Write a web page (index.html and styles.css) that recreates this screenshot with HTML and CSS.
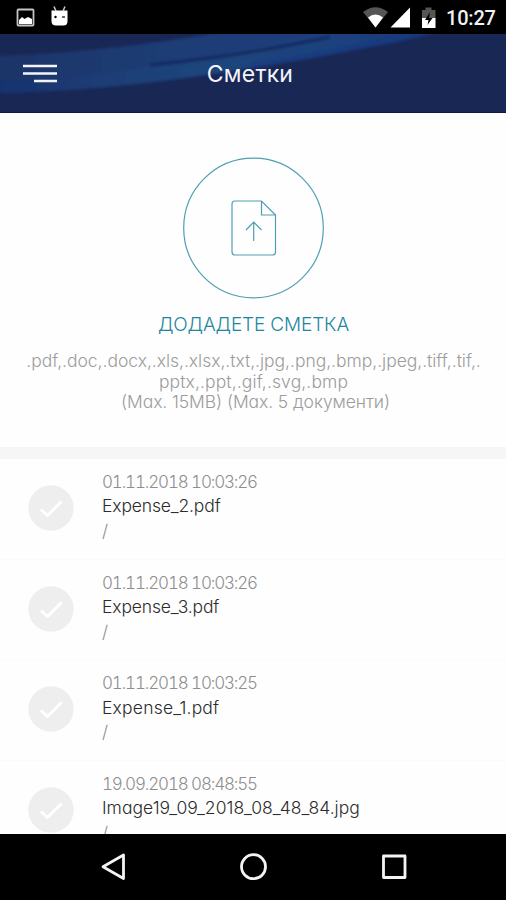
FILE: index.html
```html
<!DOCTYPE html>
<html lang="mk">
<head>
<meta charset="utf-8">
<title>Сметки</title>
<link rel="stylesheet" href="styles.css">
</head>
<body>
<div class="status">
  <svg class="status-left" width="60" height="34" viewBox="0 0 60 34">
    <rect x="17.5" y="9.5" width="16" height="16" rx="1" fill="none" stroke="#c4c4c4" stroke-width="1.800"/>
    <path d="M19 24V20l3-3 2.500 2 3.500-2 4 2v5z" fill="#fff"/>
    <path d="M51.500 10.500H67.500V21Q67.500 25.500 63.500 25.500H56Q51.500 25.500 51.500 21z" fill="#fff"/>
    <path d="M54 6.500l2 4.500M65 6.500l-2 4.500" stroke="#ccc" stroke-width="1.500"/>
    <circle cx="55.500" cy="17" r="1.200"/><path d="M62 17h3" stroke="#000" stroke-width="1.200"/>
  </svg>
  <svg width="78" height="34" viewBox="360 0 78 34">
    <path d="M363 12Q375.500 2.500 388 12L375.500 27.500z" fill="#555"/>
    <path d="M368 17.500Q375.500 11.500 383 17.500L375.500 27.500z" fill="#fff"/>
    <path d="M390.500 27.500L410 7.500V27.500z" fill="#fff"/>
    <path d="M422 10h3.500V7.500h6V10h4v9h-13.500z" fill="#555"/>
    <path d="M422 18h13.500v10H422z" fill="#fff"/>
    <path d="M430 12l-5 8h3.500l-1 5 5-7h-3.500z"/>
  </svg>
  <span class="clock">10:27</span>
</div>
<header class="bar">
  <svg class="waves" width="506" height="79" viewBox="0 0 506 79">
    <defs>
      <linearGradient id="upper" x1="0" x2="1" y1="0" y2="0"><stop offset="0" stop-color="#1a3466"/><stop offset=".6" stop-color="#1b3e77"/><stop offset="1" stop-color="#193b7c"/></linearGradient>
      <linearGradient id="lower" gradientUnits="userSpaceOnUse" x1="0" x2="440" y1="0" y2="0"><stop offset="0" stop-color="#18336e"/><stop offset=".45" stop-color="#1e457c"/><stop offset=".75" stop-color="#1d427e"/><stop offset="1" stop-color="#193575"/></linearGradient>
      <filter id="soft" x="-5%" y="-30%" width="110%" height="160%"><feGaussianBlur stdDeviation="1.800"/></filter>
    </defs>
    <g filter="url(#soft)">
      <path d="M-10 22Q110 19 245 -6H345Q240 19 150 33 70 48 -10 60z" fill="url(#upper)"/>
      <path d="M-10 46Q60 46 130 36 230 20 345 -6H460Q350 17 250 34 110 58 -10 59z" fill="url(#lower)"/>
      <path d="M150 31Q240 22 330 3" fill="none" stroke="#192c64" stroke-width="4"/>
      <path d="M250 32Q340 17 420 0" fill="none" stroke="#183b82" stroke-width="6" opacity=".7"/>
    </g>
  </svg>
  <svg class="menu" width="36" height="22" viewBox="0 0 36 22"><path d="M1 3h34M1 10.500h34M12 18h23" stroke="#f3f3fb" stroke-width="2.400"/></svg>
  <h1 class="title">Сметки</h1>
</header>
<main class="content">
  <section class="upload">
    <svg class="upload-icon" width="142" height="142" viewBox="0 0 142 142" fill="none" stroke="#4f9fb2" stroke-width="1.200">
      <circle cx="70.500" cy="71" r="69.800"/>
      <path d="M78.500 44H52Q49 44 49 47V95Q49 98 52 98H89.500Q92.500 98 92.500 95V58zM78.500 44V58H92.500"/>
      <path d="M70.700 84V65M63 73L70.700 65 78.500 73"/>
    </svg>
    <h2 class="upload-title">ДОДАДЕТЕ СМЕТКА</h2>
    <p class="hint"><span class="exts">.pdf,.doc,.docx,.xls,.xlsx,.txt,.jpg,.png,.bmp,.jpeg,.tiff,.tif,.</span><span class="exts-more">pptx,.ppt,.gif,.svg,.bmp</span><span class="limits">(Max. 15MB) (Max. 5 документи)</span></p>
  </section>
  <ul class="list">
    <li class="row"><svg class="check" viewBox="0 0 46 46"><circle cx="23" cy="23" r="22.700"/><path d="M13 24.500l6.500 6L33.500 16.500"/></svg><div><p class="date">01.11.2018 10:03:26</p><p class="name">Expense_2.pdf</p><p class="path">/</p></div></li>
    <li class="row"><svg class="check" viewBox="0 0 46 46"><circle cx="23" cy="23" r="22.700"/><path d="M13 24.500l6.500 6L33.500 16.500"/></svg><div><p class="date">01.11.2018 10:03:26</p><p class="name">Expense_3.pdf</p><p class="path">/</p></div></li>
    <li class="row"><svg class="check" viewBox="0 0 46 46"><circle cx="23" cy="23" r="22.700"/><path d="M13 24.500l6.500 6L33.500 16.500"/></svg><div><p class="date">01.11.2018 10:03:25</p><p class="name short">Expense_1.pdf</p><p class="path">/</p></div></li>
    <li class="row"><svg class="check" viewBox="0 0 46 46"><circle cx="23" cy="23" r="22.700"/><path d="M13 24.500l6.500 6L33.500 16.500"/></svg><div><p class="date">19.09.2018 08:48:55</p><p class="name long">Image19_09_2018_08_48_84.jpg</p><p class="path">/</p></div></li>
  </ul>
</main>
<nav class="nav">
  <svg width="506" height="66" viewBox="0 0 506 66" fill="none" stroke="#f4f4f4" stroke-width="2.800" stroke-linejoin="round">
    <path d="M103 32.700L123.500 21V44.500z"/><circle cx="253.500" cy="32.700" r="12"/><rect x="383.500" y="22" width="21.500" height="21.500"/>
  </svg>
</nav>
</body>
</html>
```
FILE: styles.css
```css
* { box-sizing: border-box; margin: 0; padding: 0; }
body {
  width: 506px; height: 900px; overflow: hidden;
  display: flex; flex-direction: column;
  background: #fff;
  font-family: Inter, "Open Sans", sans-serif;
  font-weight: 300;
  font-feature-settings: "cv11";
}
.status { height: 34px; flex: none; background: #000; display: flex; align-items: center; padding-right: 10px; }
.status-left { margin-right: auto; overflow: visible; }
.clock { font: 500 20px/34px Roboto, sans-serif; color: #f2f2f2; margin: 2px 0 0 8px; width: 50px; white-space: nowrap; letter-spacing: -0.2px; }
.bar {
  position: relative; height: 79px; flex: none;
  display: flex; align-items: center; justify-content: center;
  background: #192755; border-bottom: 1px solid #101a40; overflow: hidden;
}
.waves { position: absolute; left: 0; top: 0; }
.menu { position: absolute; left: 22px; top: 29px; }
.title { font-size: 23px; font-weight: 400; color: #f4f4fa; line-height: 30px; margin: 2px 0 0 -6px; letter-spacing: 0.2px; z-index: 1; }
.content { height: 721px; flex: none; overflow: hidden; background: #fefefe; }
.upload {
  height: 346px; padding: 44px 0 0 1px;
  display: flex; flex-direction: column; align-items: center;
  border-bottom: 12px solid #f6f6f6;
}
.upload-icon { flex: none; }
.upload-title { font-size: 19px; font-weight: 300; line-height: 24px; margin-top: 14px; color: #1d879e; white-space: nowrap; letter-spacing: -0.15px; }
.hint { display: flex; flex-direction: column; align-items: center; margin-top: 14px; font-size: 17.500px; line-height: 20.700px; color: #9c9c9c; white-space: nowrap; }
.exts { letter-spacing: -0.03px; }
.exts-more { letter-spacing: 0.12px; }
.limits { letter-spacing: -0.09px; padding-left: 4px; }
.list { list-style: none; }
.row { height: 100.700px; display: flex; padding: 11px 0 0 28px; border-bottom: 1px solid #fafafa; }
.check { width: 46px; height: 46px; margin: 15px 28px 0 0; flex: none; }
.check circle { fill: #eee; }
.check path { fill: none; stroke: #fff; stroke-width: 3; }
.date, .name, .path { font-size: 17.500px; line-height: 24.400px; white-space: nowrap; }
.date, .path { color: #8e8e8e; }
.date { font-size: 17px; letter-spacing: -1.15px; font-feature-settings: "cv11", "tnum"; }
.name { color: #2c2c2c; letter-spacing: -0.15px; }
.short { letter-spacing: 0.2px; }
.long { letter-spacing: 0.03px; }
.nav { height: 66px; flex: none; background: #000; }
```
